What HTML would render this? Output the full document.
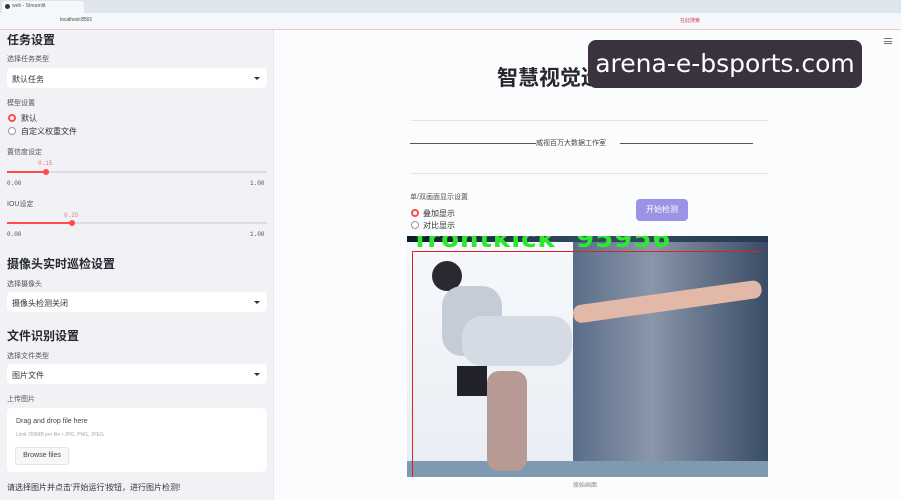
<!DOCTYPE html><html><head><meta charset="utf-8"><style>
*{margin:0;padding:0;box-sizing:border-box}
body{width:901px;height:500px;overflow:hidden;background:#fbfcfd;font-family:"Liberation Sans","Noto Sans CJK SC",sans-serif;position:relative;color:#31333f}
.a{position:absolute}
.sb{left:0;top:30px;width:274px;height:470px;background:#f0f2f6;border-right:1px solid #e6e8ee}
.h{font-weight:bold;font-size:12px;color:#262730}
.l{font-size:7px;color:#555}
.sel{background:#fff;border-radius:4px;height:20px;font-size:8px;color:#333;padding:6px 5px;left:7px;width:260px}
.sel:after{content:"";position:absolute;right:7px;top:9px;border:3px solid transparent;border-top:3px solid #333}
.t{font-size:8px;color:#333}
.rd{width:8px;height:8px;border-radius:50%;border:1px solid #999;background:#fff}
.rd.on{border:2.5px solid #ff4b4b}
.mono{font-family:"Liberation Mono",monospace;font-size:6px;color:#555}
</style></head><body>
<div class="a" style="left:0;top:0;width:901px;height:13px;background:#dfe5ee"></div>
<div class="a" style="left:2px;top:1px;width:82px;height:12px;background:#f5f7fa;border-radius:3px 3px 0 0"></div>
<div class="a" style="left:5px;top:4px;width:5px;height:5px;border-radius:50%;background:#333"></div>
<div class="a" style="left:12px;top:3px;font-size:5px;color:#555">web - Streamlit</div>
<div class="a" style="left:0;top:13px;width:901px;height:16px;background:#f5f7fa"></div>
<div class="a" style="left:60px;top:17px;font-size:5px;color:#444">localhost:8501</div>
<div class="a" style="left:680px;top:17px;font-size:5px;color:#c44">在此搜索</div>
<div class="a" style="left:0;top:29px;width:901px;height:1px;background:#f0c8c0"></div>
<div class="a sb"></div>
<div class="a h" style="left:7px;top:31px">任务设置</div>
<div class="a l" style="left:7px;top:54px">选择任务类型</div>
<div class="a sel" style="top:68px">默认任务</div>
<div class="a l" style="left:7px;top:98px">模型设置</div>
<div class="a rd on" style="left:8px;top:114px"></div><div class="a t" style="left:21px;top:113px">默认</div>
<div class="a rd" style="left:8px;top:127px"></div><div class="a t" style="left:21px;top:126px">自定义权重文件</div>
<div class="a l" style="left:7px;top:147px">置信度设定</div>
<div class="a mono" style="left:38px;top:160px;color:#e77">0.15</div>
<div class="a" style="left:7px;top:171px;width:260px;height:2px;background:#dcdde2"></div>
<div class="a" style="left:7px;top:171px;width:39px;height:2px;background:#ff4b4b"></div>
<div class="a" style="left:43px;top:169px;width:6px;height:6px;border-radius:50%;background:#ff4b4b"></div>
<div class="a mono" style="left:7px;top:180px">0.00</div><div class="a mono" style="left:250px;top:180px">1.00</div>
<div class="a l" style="left:7px;top:199px">IOU设定</div>
<div class="a mono" style="left:64px;top:212px;color:#e77">0.25</div>
<div class="a" style="left:7px;top:222px;width:260px;height:2px;background:#dcdde2"></div>
<div class="a" style="left:7px;top:222px;width:65px;height:2px;background:#ff4b4b"></div>
<div class="a" style="left:69px;top:220px;width:6px;height:6px;border-radius:50%;background:#ff4b4b"></div>
<div class="a mono" style="left:7px;top:231px">0.00</div><div class="a mono" style="left:250px;top:231px">1.00</div>
<div class="a h" style="left:7px;top:255px">摄像头实时巡检设置</div>
<div class="a l" style="left:7px;top:279px">选择摄像头</div>
<div class="a sel" style="top:292px">摄像头检测关闭</div>
<div class="a h" style="left:7px;top:327px">文件识别设置</div>
<div class="a l" style="left:7px;top:351px">选择文件类型</div>
<div class="a sel" style="top:364px">图片文件</div>
<div class="a l" style="left:7px;top:394px">上传图片</div>
<div class="a" style="left:7px;top:408px;width:260px;height:64px;background:#fff;border-radius:4px"></div>
<div class="a" style="left:16px;top:418px;font-size:7px;color:#444">Drag and drop file here</div>
<div class="a" style="left:16px;top:432px;font-size:5px;color:#aaa">Limit 200MB per file • JPG, PNG, JPEG</div>
<div class="a" style="left:15px;top:447px;width:54px;height:18px;border:1px solid #e3e3e3;background:#f7f7f7;border-radius:3px;font-size:7px;color:#444;text-align:center;line-height:16px">Browse files</div>
<div class="a" style="left:7px;top:482px;font-size:8px;color:#333">请选择图片并点击'开始运行'按钮，进行图片检测!</div>
<div class="a" style="left:884px;top:38px;width:8px;height:6px;border-top:1px solid #777;border-bottom:1px solid #777"></div>
<div class="a" style="left:884px;top:41px;width:8px;height:1px;background:#777"></div>
<div class="a" style="left:497px;top:62px;font-size:21px;font-weight:bold;color:#262730">智慧视觉巡检系统</div>
<div class="a" style="left:588px;top:40px;width:274px;height:48px;background:#3b323f;border-radius:8px;color:#fff;font-size:25px;line-height:48px;text-align:center;font-family:'DejaVu Sans',sans-serif">arena-e-bsports.com</div>
<div class="a" style="left:411px;top:120px;width:357px;height:1px;background:#e3e3e3"></div>
<div class="a" style="left:410px;top:143px;width:126px;height:1px;background:#555"></div>
<div class="a" style="left:536px;top:138px;font-size:7px;color:#444">威视百万大数据工作室</div>
<div class="a" style="left:620px;top:143px;width:133px;height:1px;background:#555"></div>
<div class="a" style="left:411px;top:173px;width:357px;height:1px;background:#e3e3e3"></div>
<div class="a l" style="left:410px;top:192px">单/双画面显示设置</div>
<div class="a rd on" style="left:411px;top:209px"></div><div class="a t" style="left:423px;top:208px">叠加显示</div>
<div class="a rd" style="left:411px;top:221px"></div><div class="a t" style="left:423px;top:220px">对比显示</div>
<div class="a" style="left:636px;top:199px;width:52px;height:22px;border-radius:4px;background:#9d93e6;color:#fff;font-size:8px;text-align:center;line-height:22px">开始检测</div>
<div class="a" style="left:407px;top:236px;width:361px;height:241px;background:linear-gradient(90deg,#0e1a28,#334a66 50%,#273a52);overflow:hidden">
<div class="a" style="left:0;top:6px;width:166px;height:225px;background:linear-gradient(#f6f8fb,#e8eef4)"></div>
<div class="a" style="left:166px;top:6px;width:195px;height:235px;background:linear-gradient(90deg,#5a6d88,#8a96aa 40%,#3a4c66)"></div>
<div class="a" style="left:0;top:225px;width:361px;height:16px;background:#7f9ab0"></div>
<div class="a" style="left:5px;top:15px;width:1px;height:226px;background:#d22"></div>
<div class="a" style="left:5px;top:15px;width:350px;height:1px;background:#d22"></div>
<div class="a" style="left:25px;top:25px;width:30px;height:30px;border-radius:50%;background:#2a2830"></div>
<div class="a" style="left:35px;top:50px;width:60px;height:70px;border-radius:20px;background:#c4ccd8"></div>
<div class="a" style="left:55px;top:80px;width:110px;height:50px;border-radius:20px;background:#d5dbe4"></div>
<div class="a" style="left:165px;top:70px;width:190px;height:18px;background:#e2b8a8;transform:rotate(-8deg);transform-origin:left top;border-radius:8px"></div>
<div class="a" style="left:50px;top:130px;width:30px;height:30px;background:#22222c"></div>
<div class="a" style="left:80px;top:135px;width:40px;height:100px;border-radius:12px;background:#b89a94"></div>
<div class="a" style="left:8px;top:-12px;font-family:'DejaVu Sans',sans-serif;font-weight:bold;font-size:26px;letter-spacing:1px;color:#2ee830;white-space:nowrap">frontkick&nbsp; 95956</div>
</div>
<div class="a" style="left:573px;top:480px;font-size:6px;color:#888">原始画面</div>
</body></html>
